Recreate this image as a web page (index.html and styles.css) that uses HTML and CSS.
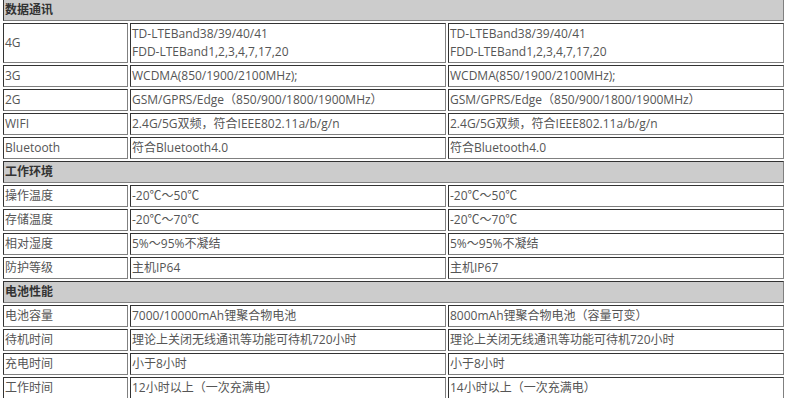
FILE: index.html
```html
<!DOCTYPE html>
<html>
<head>
<meta charset="utf-8">
<link rel="stylesheet" href="styles.css">
</head>
<body>
<table class="spec">
  <colgroup><col class="c1"><col class="c2"><col class="c3"></colgroup>
  <tr class="sec"><td colspan="3">数据通讯</td></tr>
  <tr><td>4G</td><td>TD-LTEBand38/39/40/41<br>FDD-LTEBand1,2,3,4,7,17,20</td><td>TD-LTEBand38/39/40/41<br>FDD-LTEBand1,2,3,4,7,17,20</td></tr>
  <tr><td>3G</td><td>WCDMA(850/1900/2100MHz);</td><td>WCDMA(850/1900/2100MHz);</td></tr>
  <tr><td>2G</td><td>GSM/GPRS/Edge（850/900/1800/1900MHz）</td><td>GSM/GPRS/Edge（850/900/1800/1900MHz）</td></tr>
  <tr><td>WIFI</td><td>2.4G/5G双频，符合IEEE802.11a/b/g/n</td><td>2.4G/5G双频，符合IEEE802.11a/b/g/n</td></tr>
  <tr><td>Bluetooth</td><td>符合Bluetooth4.0</td><td>符合Bluetooth4.0</td></tr>
  <tr class="sec"><td colspan="3">工作环境</td></tr>
  <tr><td>操作温度</td><td>-20℃～50℃</td><td>-20℃～50℃</td></tr>
  <tr><td>存储温度</td><td>-20℃～70℃</td><td>-20℃～70℃</td></tr>
  <tr><td>相对湿度</td><td>5%～95%不凝结</td><td>5%～95%不凝结</td></tr>
  <tr><td>防护等级</td><td>主机IP64</td><td>主机IP67</td></tr>
  <tr class="sec"><td colspan="3">电池性能</td></tr>
  <tr><td>电池容量</td><td>7000/10000mAh锂聚合物电池</td><td>8000mAh锂聚合物电池（容量可变）</td></tr>
  <tr><td>待机时间</td><td>理论上关闭无线通讯等功能可待机720小时</td><td>理论上关闭无线通讯等功能可待机720小时</td></tr>
  <tr><td>充电时间</td><td>小于8小时</td><td>小于8小时</td></tr>
  <tr><td>工作时间</td><td>12小时以上（一次充满电）</td><td>14小时以上（一次充满电）</td></tr>
</table>
</body>
</html>
```
FILE: styles.css
```css
html, body {
  margin: 0;
  padding: 0;
  background: #fff;
}
.spec {
  margin: -3px 0 0 1px;
  width: 785px;
  border-collapse: separate;
  border-spacing: 2px;
  table-layout: fixed;
  font-family: "Open Sans", "Noto Sans CJK SC", sans-serif;
  font-size: 12px;
  color: #555;
}
.c1 { width: 125px; }
.c2 { width: 316px; }
.spec td {
  padding: 1px 1px;
  line-height: 18px;
  border-style: solid;
  border-width: 1px;
  border-color: #333 #808080 #808080 #333;
  vertical-align: middle;
  white-space: nowrap;
}
.spec .sec td {
  background: #ccc;
  font-weight: bold;
  color: #333;
}
```
